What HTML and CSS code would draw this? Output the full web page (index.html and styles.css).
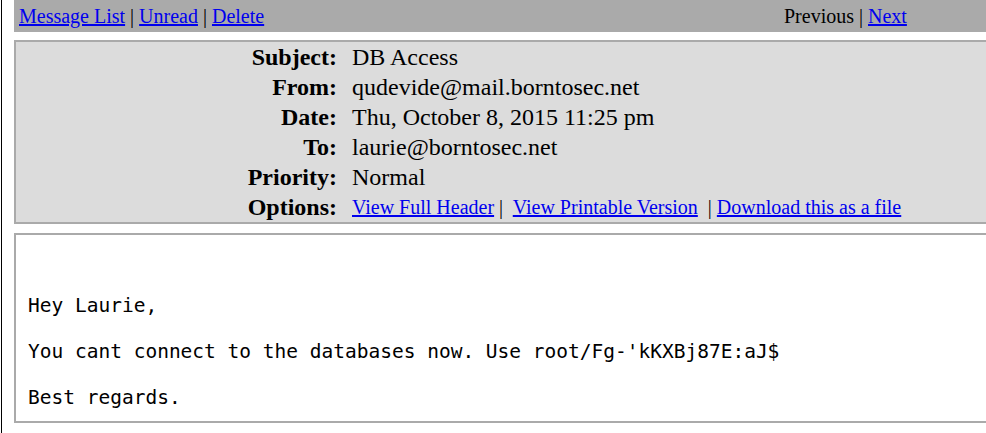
FILE: index.html
```html
<!DOCTYPE html>
<html>
<head>
<meta charset="utf-8">
<link rel="stylesheet" href="styles.css">
</head>
<body>
<div class="page">
  <div class="nav">
    <div class="nav-left"><a href="#">Message List</a> | <a href="#">Unread</a> | <a href="#">Delete</a></div>
    <div class="nav-right">Previous | <a href="#">Next</a></div>
  </div>
  <div class="header">
    <div class="label">Subject:</div><div class="value">DB Access</div>
    <div class="label">From:</div><div class="value">qudevide@mail.borntosec.net</div>
    <div class="label">Date:</div><div class="value">Thu, October 8, 2015 11:25 pm</div>
    <div class="label">To:</div><div class="value">laurie@borntosec.net</div>
    <div class="label">Priority:</div><div class="value">Normal</div>
    <div class="label">Options:</div><div class="value options"><a href="#">View Full Header</a> |&nbsp; <a href="#">View Printable Version</a> &nbsp;| <a href="#">Download this as a file</a></div>
  </div>
  <div class="body">
<pre class="message">


Hey Laurie,

You cant connect to the databases now. Use root/Fg-'kKXBj87E:aJ$

Best regards.</pre>
  </div>
</div>
</body>
</html>
```
FILE: styles.css
```css
html, body {
  margin: 0;
  padding: 0;
  background: #fff;
  overflow: hidden;
}
body {
  font-family: "Liberation Serif", "Times New Roman", serif;
  color: #000;
  width: 986px;
  height: 433px;
}
a {
  color: #0000ee;
  text-decoration: underline;
}
.page {
  margin-left: 1px;
  border-left: 1px solid #000;
  padding-left: 12px;
  height: 433px;
  box-sizing: border-box;
  width: 1020px;
}
.nav {
  background: #aaaaaa;
  height: 32px;
  display: grid;
  grid-template-columns: 765px auto;
  align-items: center;
  padding-left: 5px;
  font-size: 20px;
  line-height: 23px;
}
.header {
  margin-top: 8px;
  border: 2px solid #aaaaaa;
  background: #dcdcdc;
  display: grid;
  grid-template-columns: 321px 1fr;
  column-gap: 15px;
  grid-auto-rows: 30px;
  align-items: center;
  font-size: 24px;
}
.label {
  font-weight: bold;
  text-align: right;
}
.options {
  font-size: 20px;
}
.body {
  margin-top: 9px;
  border: 2px solid #aaaaaa;
  height: 190px;
  box-sizing: border-box;
  padding: 0 12px;
}
.message {
  margin: 13px 0 0;
  font-family: "DejaVu Sans Mono", monospace;
  font-size: 19.5px;
  line-height: 23px;
}
```
